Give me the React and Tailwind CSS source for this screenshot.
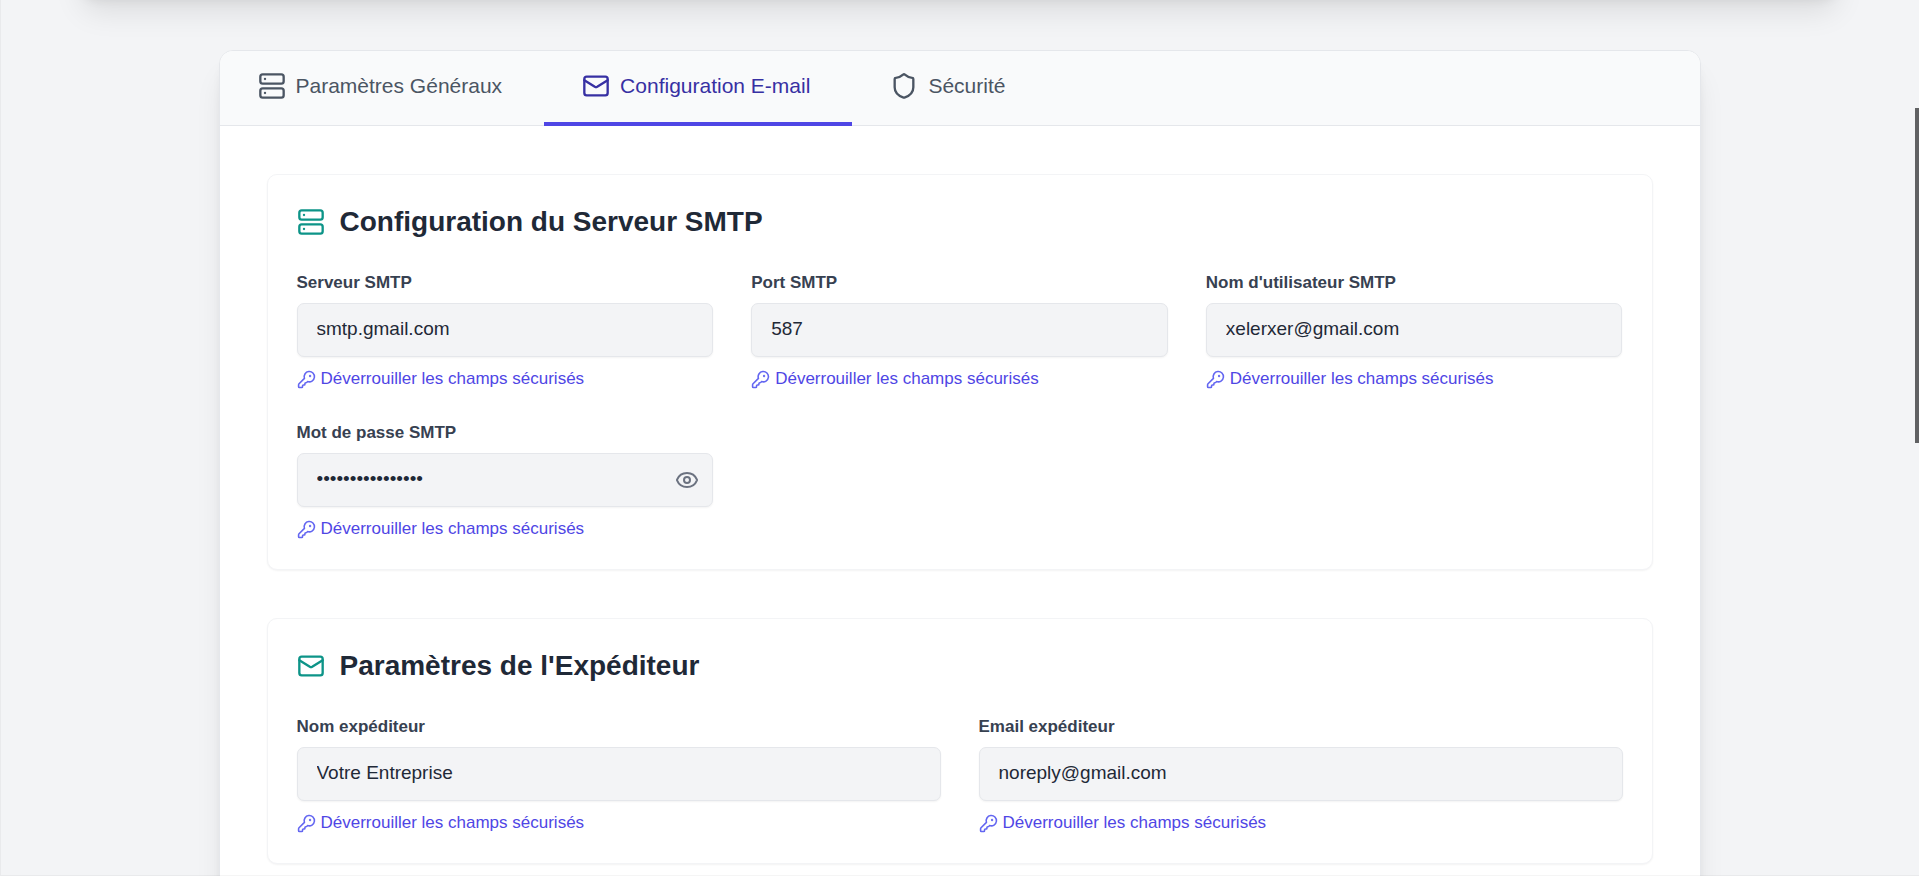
import { useState } from "react";
import { Server, Mail, Shield, KeyRound, Eye, EyeOff } from "lucide-react";

const tabs = [
  { id: "general", label: "Paramètres Généraux", Icon: Server },
  { id: "email", label: "Configuration E-mail", Icon: Mail },
  { id: "security", label: "Sécurité", Icon: Shield },
];

function Field({ id, label, type = "text", value }) {
  const [visible, setVisible] = useState(false);
  const isPassword = type === "password";
  const Icon = visible ? EyeOff : Eye;
  return (
    <div>
      <label htmlFor={id} className="mb-2 block text-[17px] leading-6 font-semibold text-[#374151]">
        {label}
      </label>
      <div className="relative">
        <input
          id={id}
          type={isPassword && visible ? "text" : type}
          defaultValue={value}
          readOnly
          className="block h-[54px] w-full rounded-[7px] border border-[#e5e7eb] bg-[#f3f4f6] px-[19px] pb-[3px] text-[19px] text-[#1f2937] shadow-xs"
        />
        {isPassword && (
          <button
            type="button"
            aria-label="Afficher le mot de passe"
            onClick={() => setVisible(!visible)}
            className="absolute inset-y-0 right-0 flex items-center px-[14px] text-[#6b7280]"
          >
            <Icon className="size-6" />
          </button>
        )}
      </div>
      <button type="button" className="mt-[10px] flex items-center gap-[5px] text-[17px] leading-6 text-[#4f46e5]">
        <KeyRound className="size-[19px] text-[#6366f1]" />
        Déverrouiller les champs sécurisés
      </button>
    </div>
  );
}

function Section({ title, Icon, columns, children }) {
  return (
    <section className="rounded-[10px] border border-[#f3f4f6] bg-white px-[29px] pt-[29px] pb-7 shadow-xs">
      <h2 className="mb-[31px] flex items-center gap-[15px] text-[28px] leading-9 font-semibold text-[#1f2937]">
        <Icon className="size-[28px] text-[#0d9488]" />
        {title}
      </h2>
      <div className={`grid gap-x-[38px] gap-y-[30px] ${columns}`}>{children}</div>
    </section>
  );
}

export default function App() {
  const [active, setActive] = useState("email");
  return (
    <div className="relative h-screen overflow-hidden bg-[#f3f4f6] font-['Liberation_Sans',Arial,sans-serif]">
      <div className="mx-[77px] -mt-[207px] h-[200px] rounded-[19px] bg-white shadow-[0_24px_30px_-6px_rgba(0,0,0,0.1),0_10px_12px_-5px_rgba(0,0,0,0.1)]" />
      <main className="mx-auto mt-[57px] w-full max-w-[1482px] overflow-hidden rounded-[14px] border border-[#e5e7eb] bg-white shadow-[0_24px_30px_-6px_rgba(0,0,0,0.1),0_10px_12px_-5px_rgba(0,0,0,0.1)]">
        <nav className="flex border-b border-[#e5e7eb] bg-[#f9fafb]">
          {tabs.map(({ id, label, Icon }) => (
            <button
              key={id}
              type="button"
              onClick={() => setActive(id)}
              className={`-mb-px flex items-center gap-[10px] border-b-4 pt-5 pr-[42px] pb-[21px] pl-[38px] text-[21px] leading-[30px] ${
                active === id ? "border-[#4f46e5] text-[#3730a3]" : "border-transparent text-[#4b5563]"
              }`}
            >
              <Icon className="size-[28px]" />
              {label}
            </button>
          ))}
        </nav>
        <div className="flex flex-col gap-12 px-[47px] py-12">
          <Section title="Configuration du Serveur SMTP" Icon={Server} columns="grid-cols-3">
            <Field id="smtp-host" label="Serveur SMTP" value="smtp.gmail.com" />
            <Field id="smtp-port" label="Port SMTP" value="587" />
            <Field id="smtp-user" label="Nom d'utilisateur SMTP" value="xelerxer@gmail.com" />
            <Field id="smtp-pass" label="Mot de passe SMTP" type="password" value="abcdefghijklmnop" />
          </Section>
          <Section title="Paramètres de l'Expéditeur" Icon={Mail} columns="grid-cols-2">
            <Field id="sender-name" label="Nom expéditeur" value="Votre Entreprise" />
            <Field id="sender-email" label="Email expéditeur" value="noreply@gmail.com" />
          </Section>
        </div>
      </main>
      <div className="pointer-events-none absolute inset-0 border-b border-l border-black/4" />
      <div className="absolute top-[108px] right-0 h-[335px] w-1 bg-[#606163]" />
    </div>
  );
}
